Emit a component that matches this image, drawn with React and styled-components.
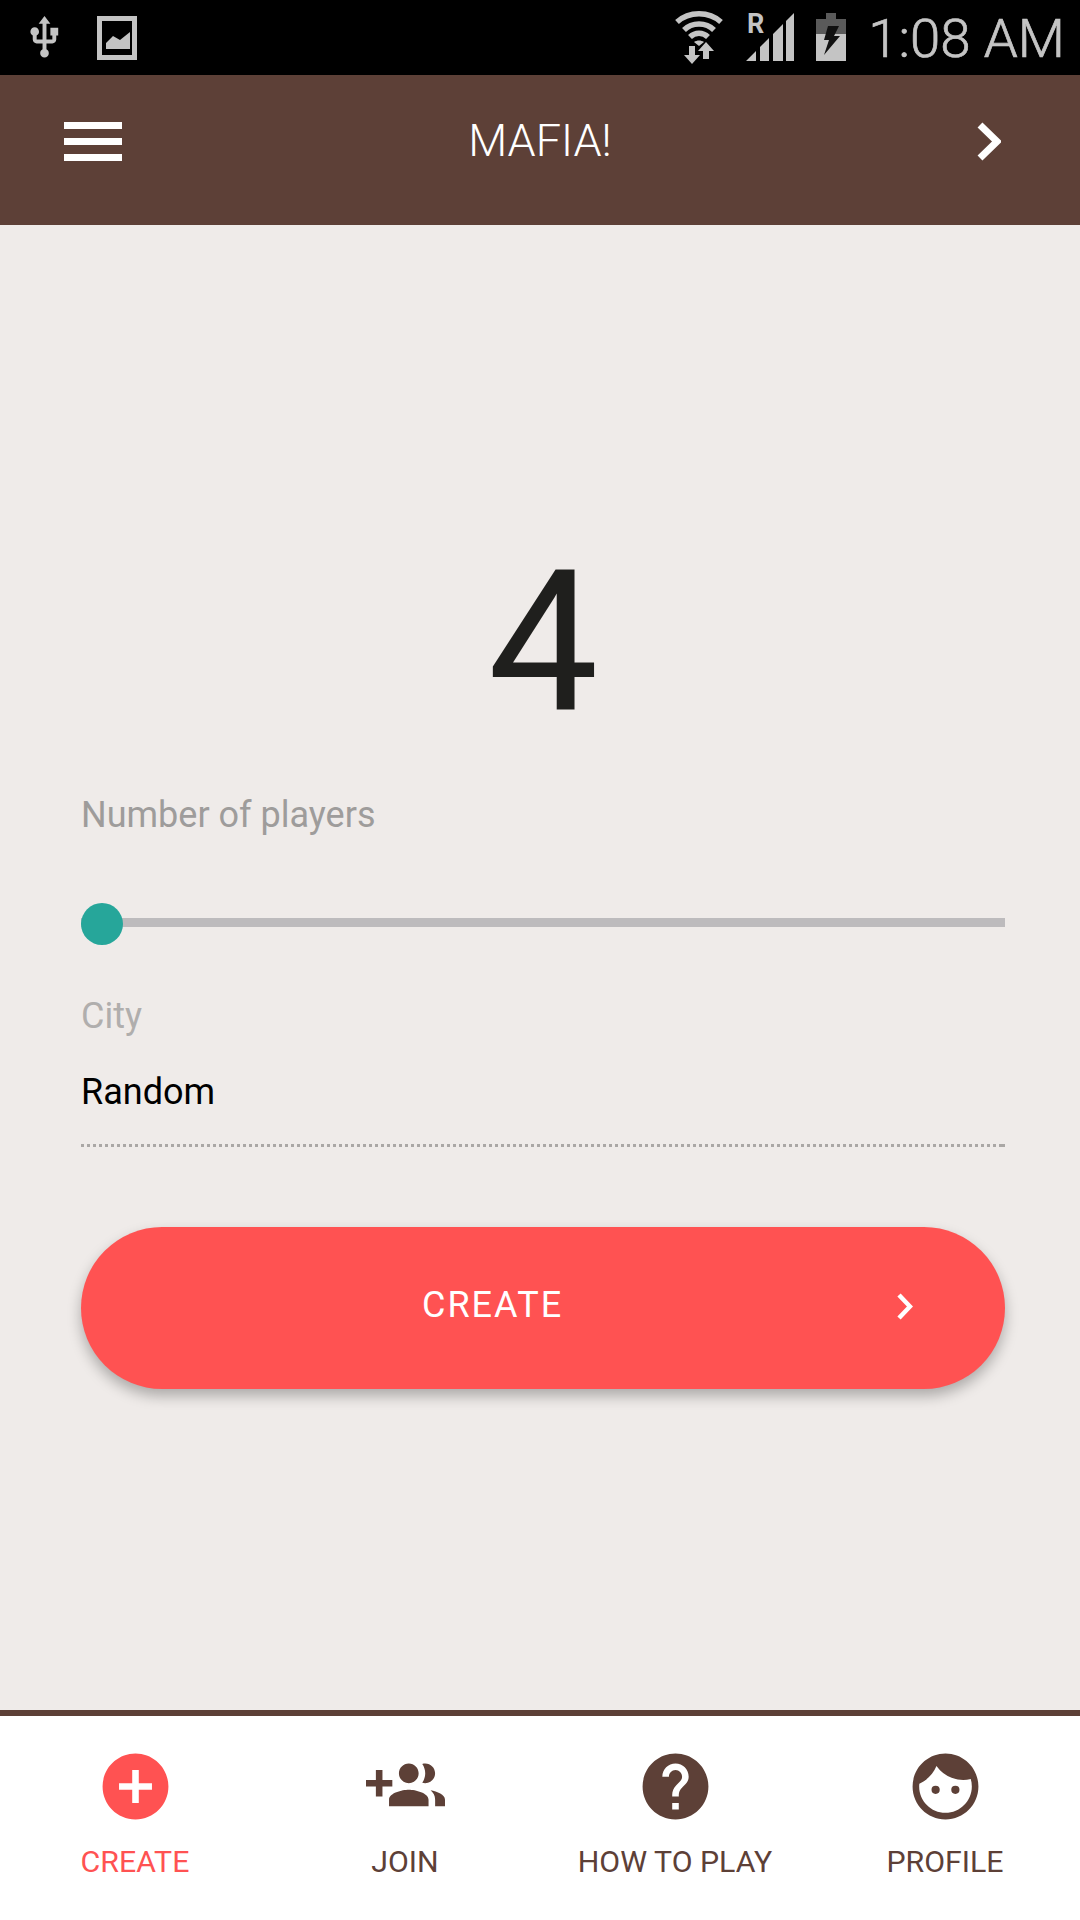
import React from 'react'
import styled, { createGlobalStyle } from 'styled-components'
import { MdAddCircle, MdHelp, MdFace, MdUsb } from 'react-icons/md'

const brown = '#5d4037'
const red = '#ff5252'
const statusGrey = '#c4c4c4'

const GlobalStyle = createGlobalStyle`
  html, body {
    margin: 0;
    padding: 0;
    background: #efebe9;
  }
  * {
    box-sizing: border-box;
  }
`

const Screen = styled.div`
  width: 1080px;
  height: 1920px;
  display: flex;
  flex-direction: column;
  overflow: hidden;
  font-family: Roboto, 'Liberation Sans', sans-serif;
  background: #efebe9;
`

const StatusBar = styled.div`
  height: 75px;
  flex: none;
  display: flex;
  align-items: center;
  justify-content: space-between;
  padding: 0 15px 0 21px;
  background: #000;
  color: ${statusGrey};
`

const StatusGroup = styled.div`
  display: flex;
  align-items: center;
  gap: ${(p) => p.$gap}px;
  padding-bottom: ${(p) => p.$lift || 0}px;
`

const Clock = styled.span`
  font-size: 54.5px;
  font-weight: 300;
  -webkit-text-stroke: 0.7px ${statusGrey};
  line-height: 60px;
  padding-top: 3px;
`

const Header = styled.header`
  height: 150px;
  flex: none;
  display: grid;
  grid-template-columns: 1fr auto 1fr;
  align-items: center;
  padding: 0 64px 17px;
  background: ${brown};
  color: #fff;
`

const Burger = styled.div`
  width: 58px;
  display: flex;
  flex-direction: column;
  gap: 9px;

  span {
    height: 7px;
    background: #fff;
  }
`

const Title = styled.h1`
  margin: 0 0 1px;
  font-size: 45px;
  font-weight: 300;
  line-height: 50px;
`

const HeaderNext = styled.svg`
  width: 24px;
  height: 39px;
  margin-right: 15px;
  justify-self: end;
`

const Main = styled.main`
  flex: 1;
  padding: 318px 75px 0 81px;
`

const PlayerCount = styled.div`
  font-size: 197px;
  font-weight: 400;
  line-height: 200px;
  text-align: center;
  color: #1f1f1d;
`

const FieldLabel = styled.div`
  margin-top: ${(p) => p.$top}px;
  font-size: 36px;
  line-height: 40px;
  color: ${(p) => p.$color};
`

const Slider = styled.div`
  position: relative;
  height: 42px;
  margin-top: 68px;
  display: flex;
  align-items: center;
`

const SliderTrack = styled.div`
  width: 100%;
  height: 9px;
  margin-bottom: 3px;
  background: #bdbbbd;
`

const SliderKnob = styled.div`
  position: absolute;
  top: 0;
  left: 0;
  width: 42px;
  height: 42px;
  border-radius: 50%;
  background: #26a69a;
`

const FieldValue = styled.div`
  margin-top: 36px;
  font-size: 36px;
  line-height: 40px;
  color: #000;
`

const DottedRule = styled.div`
  height: 3px;
  margin-top: 32px;
  border-right: 3px solid #aaa7a5;
  background-image: linear-gradient(to right, #aaa7a5 50%, transparent 50%);
  background-size: 6px 3px;
`

const CreateButton = styled.button`
  width: 100%;
  height: 162px;
  margin-top: 80px;
  padding: 0 92px 6px 341px;
  display: flex;
  align-items: center;
  justify-content: space-between;
  border: none;
  border-radius: 81px;
  background: ${red};
  color: #fff;
  font-family: inherit;
  font-size: 36px;
  letter-spacing: 2px;
  box-shadow: 0 7px 14px rgba(0, 0, 0, 0.28);
`

const ButtonNext = styled.svg`
  width: 16px;
  height: 27px;
  margin-top: 3px;
`

const TabBar = styled.nav`
  height: 210px;
  flex: none;
  display: grid;
  grid-template-columns: repeat(4, 1fr);
  padding-top: 31px;
  border-top: 6px solid ${brown};
  background: #fff;
`

const Tab = styled.div`
  display: flex;
  flex-direction: column;
  align-items: center;
  color: ${(p) => (p.$active ? red : brown)};

  svg {
    width: 79px;
    height: 79px;
    display: block;
  }
`

const TabLabel = styled.span`
  margin-top: 18px;
  font-size: 30.3px;
  line-height: 36px;
`

const Usb = styled(MdUsb)`
  width: 47px;
  height: 47px;
`

const SignalSvg = styled.svg`
  margin-bottom: 3px;
`

const JoinIcon = () => (
  <svg viewBox="0 0 24 24" fill="currentColor">
    <path d="M8 10H5V7H3v3H0v2h3v3h2v-3h3v-2zm10 1c1.66 0 2.99-1.34 2.99-3S19.66 5 18 5c-.32 0-.63.05-.91.14.57.81.9 1.79.9 2.86s-.34 2.04-.9 2.86c.28.09.59.14.91.14zm-5 0c1.66 0 2.99-1.34 2.99-3S14.66 5 13 5s-3 1.34-3 3 1.34 3 3 3zm6.62 2.16c.83.73 1.38 1.66 1.38 2.84v2h3v-2c0-1.54-2.37-2.49-4.38-2.84zM13 13c-2 0-6 1-6 3v2h12v-2c0-2-4-3-6-3z" />
  </svg>
)

const tabs = [
  { label: 'CREATE', Icon: MdAddCircle, active: true },
  { label: 'JOIN', Icon: JoinIcon },
  { label: 'HOW TO PLAY', Icon: MdHelp },
  { label: 'PROFILE', Icon: MdFace },
]

const ImageStatusIcon = () => (
  <svg width="40" height="44" viewBox="0 0 40 44">
    <path
      fill={statusGrey}
      fillRule="evenodd"
      d="M0 0h40v44H0zM5 5v34h30V5zM9 33l0-6 7-7 7 4 10-8v17z"
    />
  </svg>
)

const WifiIcon = () => (
  <svg width="50" height="54" viewBox="0 0 50 54">
    <g fill="none" stroke={statusGrey} strokeWidth="5.5">
      <path d="M3 12C15 1 35 1 47 12" />
      <path d="M10 20C18 12 32 12 40 20" />
      <path d="M16 27C21 22 29 22 34 27" />
    </g>
    <path fill={statusGrey} d="M20 32C23 30 27 30 30 32L25 36z" />
    <path fill={statusGrey} d="M15 36h6v9h5l-8 9-8-9h5zM29 49V41h-5l8-9 8 9h-5v8z" />
  </svg>
)

const SignalIcon = () => (
  <SignalSvg width="48" height="52" viewBox="0 -4 48 52">
    <text x="1" y="20" fill={statusGrey} fontFamily="Roboto, sans-serif" fontWeight="700" fontSize="27">
      R
    </text>
    <path
      fill={statusGrey}
      d="M0 48 10 38V48zM14 34 23 25V48H14zM27 21 37 11V48H27zM40 8 48 0V48H40z"
    />
  </SignalSvg>
)

const BatteryIcon = () => (
  <svg width="30" height="48" viewBox="0 0 30 48">
    <path fill="#5a5a5a" d="M10 0h10v6h10v15H0V6h10z" />
    <path fill={statusGrey} d="M0 21h30v27H0z" />
    <path fill="#111" d="M12 13h11l-5 10h6L8 42l5-15H8z" />
  </svg>
)

const App = () => (
  <Screen>
    <GlobalStyle />
    <StatusBar>
      <StatusGroup $gap={29}>
        <Usb />
        <ImageStatusIcon />
      </StatusGroup>
      <StatusGroup $gap={22} $lift={2}>
        <WifiIcon />
        <SignalIcon />
        <BatteryIcon />
        <Clock>1:08 AM</Clock>
      </StatusGroup>
    </StatusBar>

    <Header>
      <Burger>
        <span />
        <span />
        <span />
      </Burger>
      <Title>MAFIA!</Title>
      <HeaderNext viewBox="0 0 24 39">
        <path d="M3 3 20 19.5 3 36" fill="none" stroke="#fff" strokeWidth="7" />
      </HeaderNext>
    </Header>

    <Main>
      <PlayerCount>4</PlayerCount>
      <FieldLabel $top={52} $color="#9e9c9b">
        Number of players
      </FieldLabel>
      <Slider>
        <SliderTrack />
        <SliderKnob />
      </Slider>
      <FieldLabel $top={51} $color="#b0aead">
        City
      </FieldLabel>
      <FieldValue>Random</FieldValue>
      <DottedRule />
      <CreateButton>
        <span>CREATE</span>
        <ButtonNext viewBox="0 0 16 27">
          <path d="M2 2 13 13.5 2 25" fill="none" stroke="#fff" strokeWidth="4.5" />
        </ButtonNext>
      </CreateButton>
    </Main>

    <TabBar>
      {tabs.map(({ label, Icon, active }) => (
        <Tab key={label} $active={active}>
          <Icon />
          <TabLabel>{label}</TabLabel>
        </Tab>
      ))}
    </TabBar>
  </Screen>
)

export default App
